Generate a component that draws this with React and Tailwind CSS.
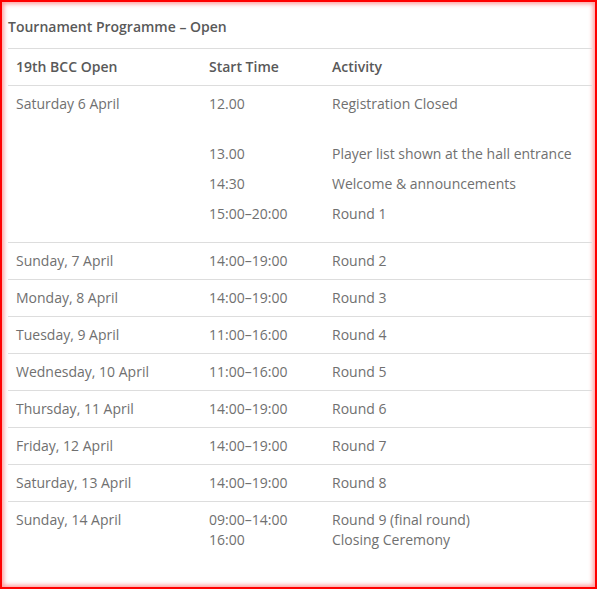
import React from "react";

// Tournament programme table — static data
const rows = [
  { day: "Sunday, 7 April", time: "14:00–19:00", what: "Round 2" },
  { day: "Monday, 8 April", time: "14:00–19:00", what: "Round 3" },
  { day: "Tuesday, 9 April", time: "11:00–16:00", what: "Round 4" },
  { day: "Wednesday, 10 April", time: "11:00–16:00", what: "Round 5" },
  { day: "Thursday, 11 April", time: "14:00–19:00", what: "Round 6" },
  { day: "Friday, 12 April", time: "14:00–19:00", what: "Round 7" },
  { day: "Saturday, 13 April", time: "14:00–19:00", what: "Round 8" },
];

export default function App() {
  return (
    <div
      className="w-[597px] h-[589px] overflow-hidden border-2 border-[#f00] shadow-[inset_0_0_4px_2px_rgba(255,60,60,0.5)] bg-white pl-[6px] pr-[3px] pt-[15px] text-[14px] leading-[20px] text-[#707070]"
      style={{ fontFamily: '"Open Sans", "Liberation Sans", sans-serif' }}
    >
      <h3 className="font-semibold text-[#595959] mb-[11px]">Tournament Programme – Open</h3>

      <table className="w-full border-collapse table-fixed">
        <colgroup>
          <col className="w-[193px]" />
          <col className="w-[123px]" />
          <col />
        </colgroup>
        <thead>
          <tr className="border-t border-[#ddd]">
            <th className="text-left font-semibold text-[#595959] px-2 py-2">19th BCC Open</th>
            <th className="text-left font-semibold text-[#595959] px-2 py-2">Start Time</th>
            <th className="text-left font-semibold text-[#595959] px-2 py-2">Activity</th>
          </tr>
        </thead>
        <tbody>
          {/* opening day has several entries */}
          <tr className="border-t border-[#ddd] align-top">
            <td className="px-2 pt-2 pb-[18px]">Saturday 6 April</td>
            <td className="px-2 pt-2 pb-[18px]">
              <div className="mb-[30px]">12.00</div>
              <div className="mb-[10px]">13.00</div>
              <div className="mb-[10px]">14:30</div>
              <div>15:00–20:00</div>
            </td>
            <td className="px-2 pt-2 pb-[18px]">
              <div className="mb-[30px]">Registration Closed</div>
              <div className="mb-[10px]">Player list shown at the hall entrance</div>
              <div className="mb-[10px]">Welcome &amp; announcements</div>
              <div>Round 1</div>
            </td>
          </tr>
          {rows.map((r) => (
            <tr key={r.day} className="border-t border-[#ddd] align-top">
              <td className="px-2 py-2">{r.day}</td>
              <td className="px-2 py-2">{r.time}</td>
              <td className="px-2 py-2">{r.what}</td>
            </tr>
          ))}
          <tr className="border-t border-[#ddd] align-top">
            <td className="px-2 py-2">Sunday, 14 April</td>
            <td className="px-2 py-2">
              09:00–14:00<br />16:00
            </td>
            <td className="px-2 py-2">
              Round 9 (final round)<br />Closing Ceremony
            </td>
          </tr>
        </tbody>
      </table>
    </div>
  );
}
